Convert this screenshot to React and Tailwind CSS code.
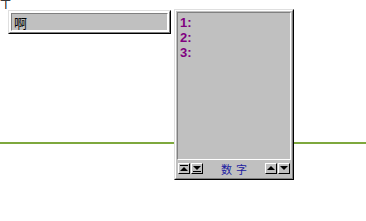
import React from "react";

function Btn({ kind }) {
  return (
    <div className="w-[12px] h-[11px] bg-[#c0c0c0] border-t border-l border-t-white border-l-white border-b border-r border-b-black border-r-black flex items-center justify-center">
      <svg width="8" height="7" viewBox="0 0 8 7">
        {kind === "top" && (
          <>
            <rect x="0" y="0" width="8" height="1" fill="#000" />
            <polygon points="4,2 8,6 0,6" fill="#000" />
          </>
        )}
        {kind === "bottom" && (
          <>
            <polygon points="0,1 8,1 4,5" fill="#000" />
            <rect x="0" y="6" width="8" height="1" fill="#000" />
          </>
        )}
        {kind === "up" && <polygon points="4,1 8,5 0,5" fill="#000" />}
        {kind === "down" && <polygon points="0,1 8,1 4,5" fill="#000" />}
      </svg>
    </div>
  );
}

export default function App() {
  const font = { fontFamily: '"Noto Sans CJK SC", "Liberation Sans", sans-serif' };
  return (
    <div className="relative w-[366px] h-[221px] bg-white overflow-hidden" style={font}>
      <div className="h-[9px] overflow-hidden">
        <div className="text-[11px] leading-[11px] mt-[-1px] text-black">丁</div>
      </div>
      <div className="ml-[8px] mt-[1px] w-[163px] h-[24px] border-t border-l border-t-[#dfdfdf] border-l-[#dfdfdf] border-b border-r border-b-black border-r-black">
        <div className="w-full h-full border-t border-l border-t-white border-l-white border-b border-r border-b-[#808080] border-r-[#808080] p-[1px]">
          <div className="w-full h-full bg-[#c0c0c0] border-t border-l border-t-[#808080] border-l-[#808080] border-b border-r border-b-white border-r-white flex items-center pl-[2px]">
            <span className="text-[13px] leading-[13px] text-black">啊</span>
          </div>
        </div>
      </div>
      <div className="mt-[108px] h-[2px] bg-[#7ea83e]" />

      <div className="absolute left-[174px] top-[9px] w-[120px] h-[171px] bg-[#c0c0c0] border-t border-l border-t-[#dfdfdf] border-l-[#dfdfdf] border-b border-r border-b-black border-r-black">
        <div className="w-full h-full border-t border-l border-t-white border-l-white border-b border-r border-b-[#808080] border-r-[#808080] p-[1px] flex flex-col">
          <div className="h-[148px] border-t border-l border-t-[#808080] border-l-[#808080] border-b border-r border-b-white border-r-white pl-[2px] pt-[2px]">
            <div className="text-[13px] leading-[15px] font-bold text-[#800080]" style={{ fontFamily: '"Liberation Sans", sans-serif' }}>
              <div>1:</div>
              <div>2:</div>
              <div>3:</div>
            </div>
          </div>
          <div className="flex-1 flex items-center px-[1px]">
            <div className="flex gap-[1px]">
              <Btn kind="top" />
              <Btn kind="bottom" />
            </div>
            <div className="flex-1 text-center text-[11px] leading-[12px] text-[#2020a0] tracking-[4px] pl-[4px]">数字</div>
            <div className="flex gap-[1px]">
              <Btn kind="up" />
              <Btn kind="down" />
            </div>
          </div>
        </div>
      </div>
    </div>
  );
}
